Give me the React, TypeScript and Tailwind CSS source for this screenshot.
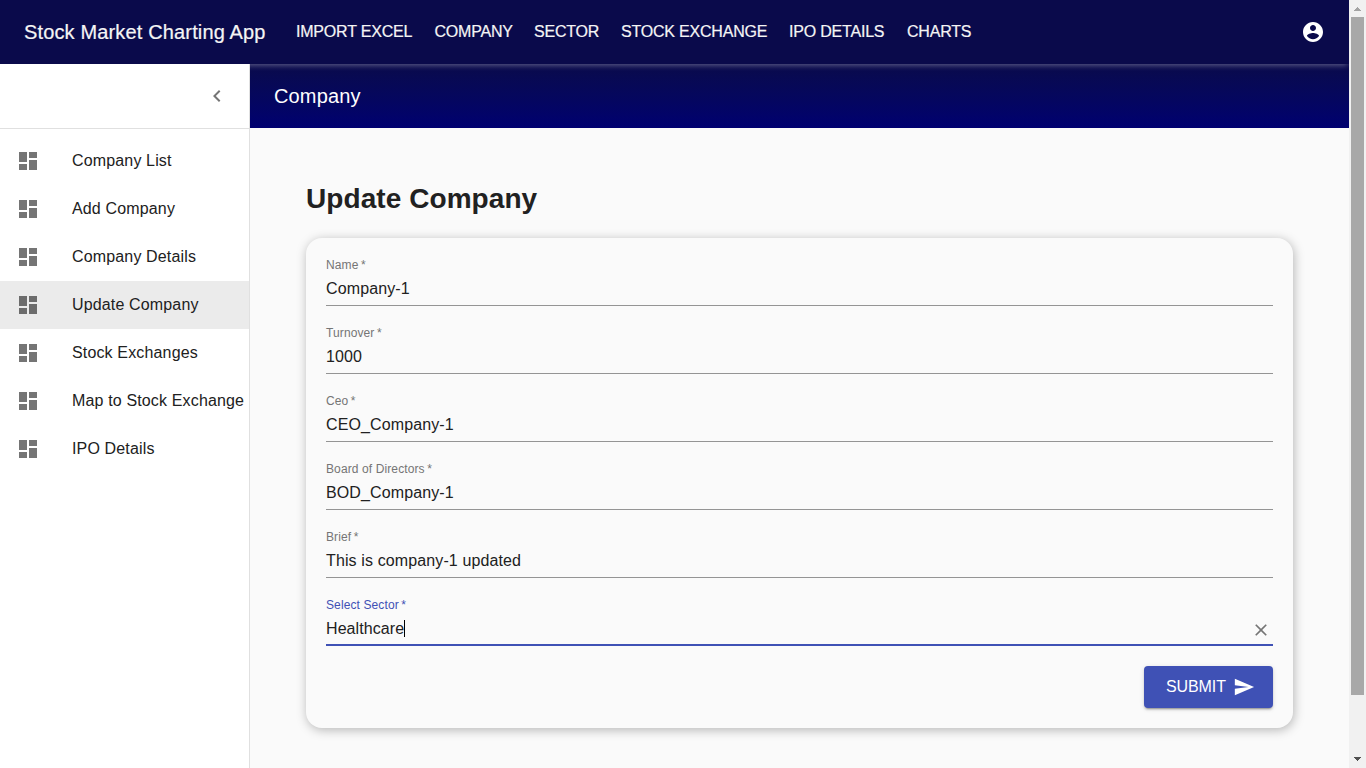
import React from "react";

const navItems = ["IMPORT EXCEL", "COMPANY", "SECTOR", "STOCK EXCHANGE", "IPO DETAILS", "CHARTS"];

const menuItems = [
  "Company List",
  "Add Company",
  "Company Details",
  "Update Company",
  "Stock Exchanges",
  "Map to Stock Exchange",
  "IPO Details",
];

const fields = [
  { label: "Name", value: "Company-1" },
  { label: "Turnover", value: "1000" },
  { label: "Ceo", value: "CEO_Company-1" },
  { label: "Board of Directors", value: "BOD_Company-1" },
  { label: "Brief", value: "This is company-1 updated" },
];

function Icon({ d, className }: { d: string; className: string }) {
  return (
    <svg viewBox="0 0 24 24" fill="currentColor" className={className}>
      <path d={d} />
    </svg>
  );
}

const icons = {
  dashboard: "M3 13h8V3H3v10zm0 8h8v-6H3v6zm10 0h8V11h-8v10zm0-18v6h8V3h-8z",
  account:
    "M12 2C6.48 2 2 6.48 2 12s4.48 10 10 10 10-4.48 10-10S17.52 2 12 2zm0 3c1.66 0 3 1.34 3 3s-1.34 3-3 3-3-1.34-3-3 1.34-3 3-3zm0 14.2c-2.5 0-4.71-1.28-6-3.22.03-1.99 4-3.08 6-3.08 1.99 0 5.97 1.09 6 3.08-1.29 1.94-3.5 3.22-6 3.22z",
  chevronLeft: "M15.41 7.41L14 6l-6 6 6 6 1.41-1.41L10.83 12z",
  close:
    "M19 6.41L17.59 5 12 10.59 6.41 5 5 6.41 10.59 12 5 17.59 6.41 19 12 13.41 17.59 19 19 17.59 13.41 12z",
  send: "M2.01 21L23 12 2.01 3 2 10l15 2-15 2z",
};

function Header() {
  return (
    <header className="relative z-10 flex h-16 shrink-0 items-center bg-[#0a0a4b] pr-6 pl-6 text-[#f5f5f5] shadow-[0_3px_6px_-2px_rgba(255,255,255,0.38)]">
      <h1 className="w-[241px] text-[20px] leading-8 tracking-[0.15px] whitespace-nowrap [-webkit-text-stroke:0.2px_#f5f5f5]">
        Stock Market Charting App
      </h1>
      <nav className="ml-[31px] flex whitespace-nowrap text-base tracking-[-0.2px] [-webkit-text-stroke:0.2px_#f5f5f5]">
        <a className="w-[138.5px]">{navItems[0]}</a>
        <a className="w-[99.5px]">{navItems[1]}</a>
        <a className="w-[87px]">{navItems[2]}</a>
        <a className="w-[168px]">{navItems[3]}</a>
        <a className="w-[118px]">{navItems[4]}</a>
        <a>{navItems[5]}</a>
      </nav>
      <Icon d={icons.account} className="ml-auto size-6 text-white" />
    </header>
  );
}

function Sidebar() {
  return (
    <aside className="relative z-20 flex w-[250px] shrink-0 flex-col border-r border-[#e0e0e0] bg-white">
      <div className="flex h-[65px] items-center justify-end border-b border-[#e0e0e0] pr-5">
        <Icon d={icons.chevronLeft} className="size-6 text-[#757575]" />
      </div>
      <ul className="pt-2">
        {menuItems.map((item) => (
          <li
            key={item}
            className={
              item === "Update Company"
                ? "flex h-12 items-center bg-[#ebebeb] pl-4"
                : "flex h-12 items-center pl-4"
            }
          >
            <Icon
              d={icons.dashboard}
              className={item === "Update Company" ? "size-6 text-[#6c6c6c]" : "size-6 text-[#757575]"}
            />
            <span className="ml-8 pb-px text-base leading-6 tracking-[0.15px] whitespace-nowrap">{item}</span>
          </li>
        ))}
      </ul>
    </aside>
  );
}

function FieldLabel({ text, active }: { text: string; active?: boolean }) {
  return (
    <div
      className={
        active
          ? "h-4 text-xs leading-[14px] tracking-[0.11px] text-[#3f51b5]"
          : "h-4 text-xs leading-[14px] tracking-[0.11px] text-[#757575]"
      }
    >
      {text}
      <span className="ml-[2.5px]">*</span>
    </div>
  );
}

function CompanyForm() {
  return (
    <form className="flex h-[490px] flex-col gap-5 rounded-2xl p-5 shadow-[1px_2px_11px_rgba(0,0,0,0.28)]">
      {fields.map((field) => (
        <div key={field.label} className="h-12 border-b border-[#949494]">
          <FieldLabel text={field.label} />
          <div className="pt-[5px] text-base leading-[19px] tracking-[0.12px]">{field.value}</div>
        </div>
      ))}
      <div className="flex h-12 justify-between border-b-2 border-[#3f51b5]">
        <div>
          <FieldLabel text="Select Sector" active />
          <div className="flex pt-[5px] text-base leading-[19px] tracking-[0.08px]">
            Healthcare
            <span className="mt-px h-[17px] w-px bg-black" />
          </div>
        </div>
        <Icon d={icons.close} className="mt-[22px] mr-[2px] size-5 text-[#757575]" />
      </div>
      <button
        type="button"
        className="flex h-[42px] w-[129px] items-center self-end rounded bg-[#3f51b5] pr-[18px] pl-[22px] text-base tracking-[-0.1px] text-white shadow-[0_3px_1px_-2px_rgba(0,0,0,0.2),0_2px_2px_0_rgba(0,0,0,0.14),0_1px_5px_0_rgba(0,0,0,0.12)]"
      >
        SUBMIT
        <Icon d={icons.send} className="ml-auto size-[22px]" />
      </button>
    </form>
  );
}

function Scrollbar() {
  return (
    <div className="flex w-[17px] shrink-0 flex-col items-center bg-[#f1f1f1]">
      <svg viewBox="0 0 17 17" className="size-[17px]" shapeRendering="crispEdges">
        <path d="M5 11h7L8.500 7z" fill="#a3a3a3" />
      </svg>
      <div className="h-[678px] w-[13px] bg-[#a8a8a8]" />
      <svg viewBox="0 0 17 17" className="mt-auto size-[17px]" shapeRendering="crispEdges">
        <path d="M5 6h7L8.500 10z" fill="#505050" />
      </svg>
    </div>
  );
}

export default function App() {
  return (
    <div className="flex h-screen w-full overflow-hidden bg-[#fafafa] font-['Liberation_Sans',Arial,sans-serif] text-[#212121]">
      <div className="flex min-w-0 flex-1 flex-col overflow-hidden">
        <Header />
        <div className="flex min-h-0 flex-1">
          <Sidebar />
          <main className="min-w-0 flex-1">
            <div className="flex h-16 items-center bg-linear-to-b from-[#0a0a4b] to-[#000070] pl-6 text-[20px] leading-8 tracking-[0.15px] text-white">
              Company
            </div>
            <section className="px-14 pt-[51px]">
              <h2 className="mb-[19px] text-[28px] leading-10 font-bold tracking-[0.07px]">Update Company</h2>
              <CompanyForm />
            </section>
          </main>
        </div>
      </div>
      <Scrollbar />
    </div>
  );
}
